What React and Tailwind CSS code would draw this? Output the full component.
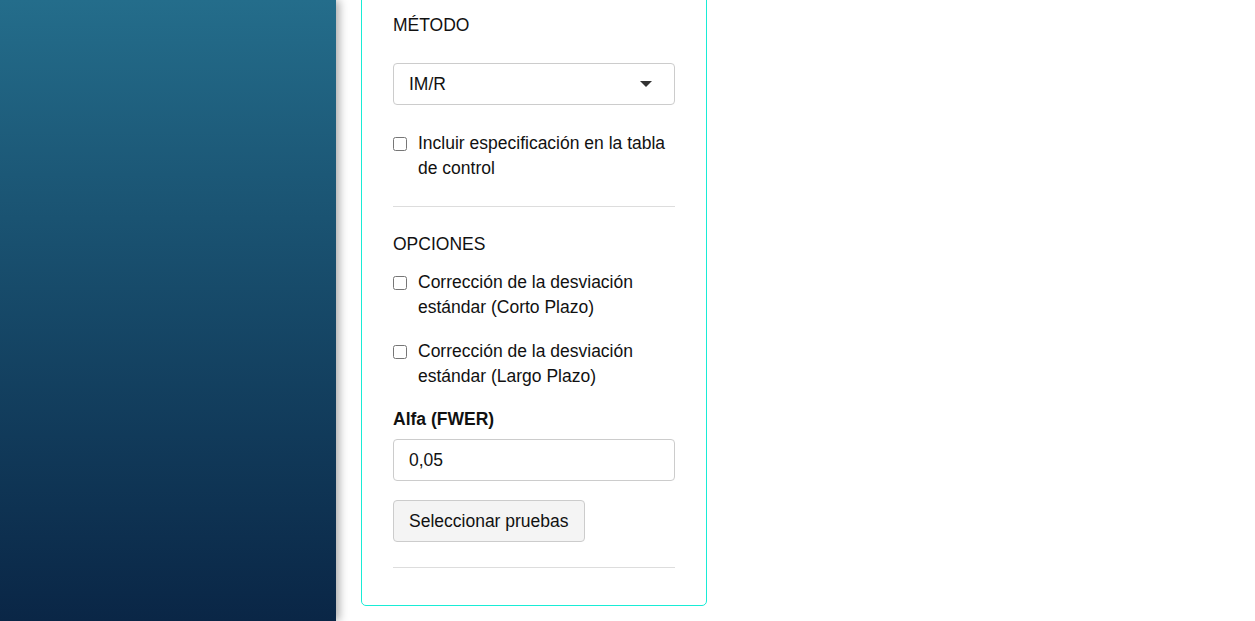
import React from "react";

function Check({ children, className = "" }) {
  return (
    <label className={`flex items-start gap-[11px] text-[17.5px] leading-[25px] text-[#111] ${className}`}>
      <input
        type="checkbox"
        className="mt-[6px] ml-0 h-[14px] w-[14px] shrink-0"
      />
      <span>{children}</span>
    </label>
  );
}

export default function App() {
  return (
    <div
      className="flex h-[621px] w-[1255px] overflow-hidden bg-white"
      style={{ fontFamily: '"Liberation Sans", Arial, sans-serif' }}
    >
      <div className="relative z-10 h-full w-[336px] shrink-0 bg-gradient-to-b from-[#246d8b] to-[#0a2646] shadow-[3px_0_9px_rgba(0,0,0,0.35)]" />
      <div className="ml-[25px] mt-[-20px] h-[626px] w-[346px] shrink-0 rounded-[5px] border border-[#18ecd6] bg-white px-[31px]">
        <div className="pt-[32px] text-[17.5px] leading-[25px] text-[#111]">MÉTODO</div>
        <div className="mt-[25px] flex h-[42px] items-center justify-between rounded-[4px] border border-[#ccc] pl-[15px] pr-[22px] text-[17.5px] text-[#111]">
          <span>IM/R</span>
          <svg width="12" height="6" viewBox="0 0 12 6">
            <path d="M0 0 L12 0 L6 6 Z" fill="#333" />
          </svg>
        </div>
        <Check className="mt-[26px]">Incluir especificación en la tabla de control</Check>
        <div className="mt-[25px] h-px bg-[#ddd]" />
        <div className="mt-[25px] text-[17.5px] leading-[25px] text-[#111]">OPCIONES</div>
        <Check className="mt-[13px]">Corrección de la desviación estándar (Corto Plazo)</Check>
        <Check className="mt-[19px]">Corrección de la desviación estándar (Largo Plazo)</Check>
        <div className="mt-[18px] text-[17.5px] font-bold leading-[25px] text-[#111]">Alfa (FWER)</div>
        <div className="mt-[7px] flex h-[42px] items-center rounded-[4px] border border-[#ccc] pl-[15px] text-[17.5px] text-[#111]">
          0,05
        </div>
        <div className="mt-[19px] flex h-[42px] w-[192px] items-center rounded-[4px] border border-[#ccc] bg-[#f4f4f4] pl-[15px] text-[17.5px] text-[#111]">
          Seleccionar pruebas
        </div>
        <div className="mt-[25px] h-px bg-[#ddd]" />
      </div>
    </div>
  );
}
